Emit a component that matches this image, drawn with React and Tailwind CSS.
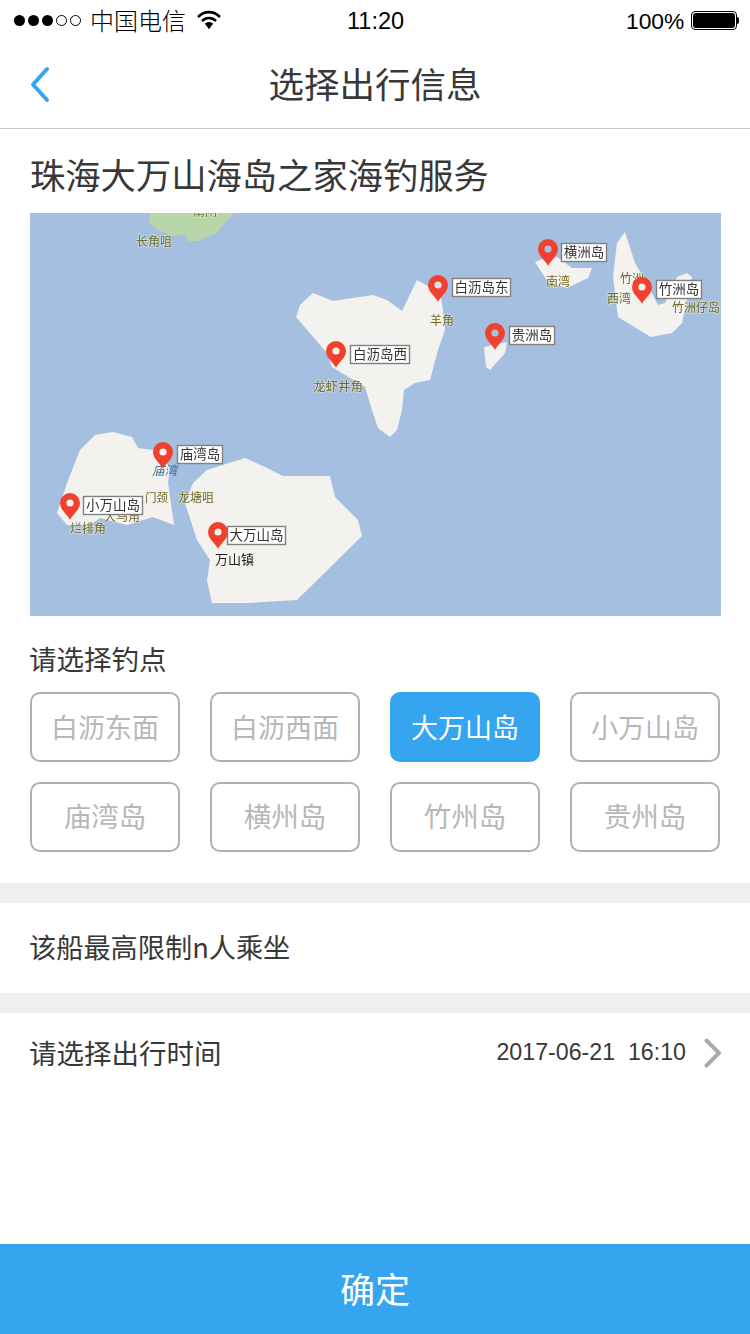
const CJK = { fontFamily: '"Noto Sans CJK SC", "Liberation Sans", sans-serif' };

const islands = [
  "313,293 333,301 373,295 387,300 402,311 417,280 440,293 443,310 445,330 438,350 430,380 415,383 404,390 402,410 397,430 390,437 378,428 372,410 365,387 332,367 327,353 296,317 300,305",
  "57,513 67,483 80,450 95,435 113,432 132,437 138,448 153,450 170,467 168,483 174,525 153,517 127,525 100,518 90,525 67,525",
  "185,503 193,483 207,470 245,458 265,467 283,476 330,476 335,497 358,520 362,536 297,600 248,603 212,603 207,580 210,560 197,540",
  "535,262 545,258 557,257 572,268 592,268 588,278 567,288 548,282",
  "484,347 507,342 505,353 490,370 486,367",
  "625,232 617,243 613,277 618,317 651,337 672,333 682,323 692,277 687,273 677,277 665,303 658,305 645,280 635,263",
];

const places = [
  ["长角咀", 136, 246, 12, "#6f6a24"],
  ["龙虾井角", 313, 391, 12.5, "#6f6a24"],
  ["羊角", 430, 325, 12, "#6f6a24"],
  ["南湾", 546, 286, 12, "#6f6a24"],
  ["竹洲", 620, 283, 12, "#6f6a24"],
  ["西湾", 607, 303, 12, "#6f6a24"],
  ["竹洲仔岛", 672, 312, 12, "#6f6a24"],
  ["门颈", 145, 502, 11.5, "#6f6a24"],
  ["龙塘咀", 178, 502, 12, "#6f6a24"],
  ["大马角", 104, 521, 12, "#6f6a24"],
  ["烂排角", 70, 533, 12, "#6f6a24"],
  ["万山镇", 215, 564, 13, "#222222"],
  ["南闸", 193, 216, 12, "#6f6a24"],
];

const labels = [
  ["白沥岛西", 350, 345, 60, 19],
  ["白沥岛东", 452, 278, 59, 19],
  ["横洲岛", 561, 243, 46, 19],
  ["竹洲岛", 656, 280, 46, 19],
  ["贵洲岛", 509, 326, 46, 19],
  ["庙湾岛", 177, 445, 46, 19],
  ["小万山岛", 83, 496, 60, 19],
  ["大万山岛", 227, 526, 59, 19],
];

const pins = [
  [336, 351, "#f3f1ee"],
  [438, 285, "#d9dfe6"],
  [548, 249, "#a8c2df"],
  [642, 287, "#f3f1ee"],
  [495, 333, "#a8c2df"],
  [163, 452, "#f3f1ee"],
  [70, 503, "#f3f1ee"],
  [218, 532, "#f3f1ee"],
];

function MapView() {
  return (
    <svg viewBox="30 213 691 403" className="block w-[691px] h-[403px]" style={CJK}>
      <defs>
        <filter id="soft" x="0" y="0" width="1" height="1">
          <feGaussianBlur stdDeviation="0.45" />
        </filter>
        <clipPath id="mapclip">
          <rect x="30" y="213" width="691" height="403" />
        </clipPath>
      </defs>
      <g clipPath="url(#mapclip)">
        <rect x="30" y="213" width="691" height="403" fill="#a4bfdf" />
        <g filter="url(#soft)">
          <polygon points="150,212 149,223 158,230 173,236 185,234 188,241 198,241 217,233 225,223 235,212" fill="#b9d6ab" />
          {islands.map((p) => (
            <polygon key={p} points={p} fill="#f4f2ef" strokeLinejoin="round" />
          ))}
          {places.map(([t, x, y, s, c]) => (
            <text key={t + x} x={x} y={y} fontSize={s} fill={c} stroke="#f3f1ee" strokeOpacity="0.55" strokeWidth="1.5" paintOrder="stroke">
              {t}
            </text>
          ))}
          <text x="152" y="475" fontSize="12.500" fill="#3f6f9f" fontStyle="italic">庙湾</text>
          {labels.map(([t, x, y, w, h]) => (
            <g key={t}>
              <rect x={x + 0.5} y={y + 0.5} width={w - 1} height={h - 1} fill="#ffffff" stroke="#808080" strokeWidth="1.400" />
              <text x={x + w / 2} y={y + 14} fontSize="13.500" fill="#333333" textAnchor="middle">{t}</text>
            </g>
          ))}
          {pins.map(([x, y, hole]) => (
            <g key={x}>
              <path
                d={`M${x} ${y + 17} C${x - 2} ${y + 12} ${x - 10} ${y + 7} ${x - 10} ${y} A10 10 0 1 1 ${x + 10} ${y} C${x + 10} ${y + 7} ${x + 2} ${y + 12} ${x} ${y + 17}Z`}
                fill="#f2412f"
              />
              <circle cx={x} cy={y} r="3.600" fill={hole} />
            </g>
          ))}
        </g>
      </g>
    </svg>
  );
}

function StatusBar() {
  return (
    <div className="relative h-10 flex items-center text-black">
      <div className="flex items-center gap-[3px] ml-[14px]">
        {[0, 1, 2].map((i) => (
          <span key={i} className="w-[11px] h-[11px] rounded-full bg-black" />
        ))}
        {[0, 1].map((i) => (
          <span key={i} className="w-[11px] h-[11px] rounded-full border border-black" />
        ))}
      </div>
      <span className="ml-[9px] text-[24px] leading-none font-light" style={CJK}>中国电信</span>
      <svg viewBox="0 0 24 20" className="ml-[11px] w-6 h-5">
        <path d="M1 7 C7.5 0.5 16.500 0.5 23 7" fill="none" stroke="#000" strokeWidth="2.600" />
        <path d="M5 11 C9 7 15 7 19 11" fill="none" stroke="#000" strokeWidth="2.600" />
        <path d="M7.800 13.600 C10.500 11.300 13.500 11.300 16.200 13.600 L12 19.200Z" fill="#000" />
      </svg>
      <span className="absolute left-[347px] top-[8px] text-[23.500px] leading-[26px] font-['Liberation_Sans']">11:20</span>
      <span className="absolute left-[626px] top-[8px] text-[22.800px] leading-[26px] font-['Liberation_Sans']">100%</span>
      <div className="absolute left-[691px] top-[11px] flex items-center">
        <div className="w-[46px] h-[19px] rounded-[4px] border border-black p-[1px]">
          <div className="w-full h-full rounded-[3px] bg-black" />
        </div>
        <div className="w-[2px] h-[7px] rounded-r-sm bg-black" />
      </div>
    </div>
  );
}

function Choice({ text, active, short }) {
  const size = short ? "text-[27.500px]" : "text-[27px]";
  return (
    <div
      className={
        active
          ? `h-[70px] flex items-center justify-center rounded-[10px] bg-[#35a5f0] text-white leading-none pb-[2px] ${size}`
          : `h-[70px] flex items-center justify-center rounded-[10px] border-2 border-[#b0b0b0] text-[#b7b7b7] leading-none pb-[2px] ${size}`
      }
    >
      {text}
    </div>
  );
}

export default function App() {
  const choices = ["白沥东面", "白沥西面", "大万山岛", "小万山岛", "庙湾岛", "横州岛", "竹州岛", "贵州岛"];
  return (
    <div className="w-[750px] h-[1334px] flex flex-col bg-white text-[#383838] overflow-hidden" style={CJK}>
      <StatusBar />
      <header className="relative h-[89px] flex items-center justify-center border-b border-[#c8c8c8]">
        <svg viewBox="0 0 24 40" className="absolute left-[28px] top-[26px] w-6 h-10">
          <path d="M19 3 L5 18.500 L19 34" fill="none" stroke="#35a5f0" strokeWidth="4" strokeLinecap="round" strokeLinejoin="round" />
        </svg>
        <h1 className="text-[35.500px] leading-none font-normal pb-[2px]">选择出行信息</h1>
      </header>

      <main className="flex-1 flex flex-col">
        <section className="pl-[30px] pr-[29px]">
          <h2 className="h-[84px] flex items-center pt-[6px] text-[35.300px] leading-none font-normal">珠海大万山海岛之家海钓服务</h2>
          <MapView />
          <p className="h-[76px] flex items-center -ml-px pt-[9px] text-[27.500px] leading-none">请选择钓点</p>
        </section>
        <div className="grid grid-cols-4 gap-x-[30px] gap-y-5 px-[30px] pb-[31px]">
          {choices.map((c, i) => (
            <Choice key={c} text={c} active={i === 2} short={c.length === 3} />
          ))}
        </div>
        <div className="h-5 bg-[#efefef]" />
        <div className="h-[90px] flex items-center pl-[29px] pb-[2px] text-[27.200px] leading-none">该船最高限制n人乘坐</div>
        <div className="h-5 bg-[#efefef]" />
        <div className="h-20 flex items-center justify-between pl-[29px] pr-[28px]">
          <span className="text-[27.500px] leading-none pb-[1px]">请选择出行时间</span>
          <div className="flex items-center gap-[18px]">
            <span className="text-[23.200px] leading-none font-['Liberation_Sans'] whitespace-pre">2017-06-21  16:10</span>
            <svg viewBox="0 0 18 30" className="w-[18px] h-[30px]">
              <path d="M2.500 2.500 L15 15 L2.500 27.500" fill="none" stroke="#aaaaaa" strokeWidth="4" strokeLinecap="round" strokeLinejoin="round" />
            </svg>
          </div>
        </div>
      </main>

      <button className="h-[90px] bg-[#35a5f0] text-white text-[35px] leading-none pb-1 flex items-center justify-center">确定</button>
    </div>
  );
}
